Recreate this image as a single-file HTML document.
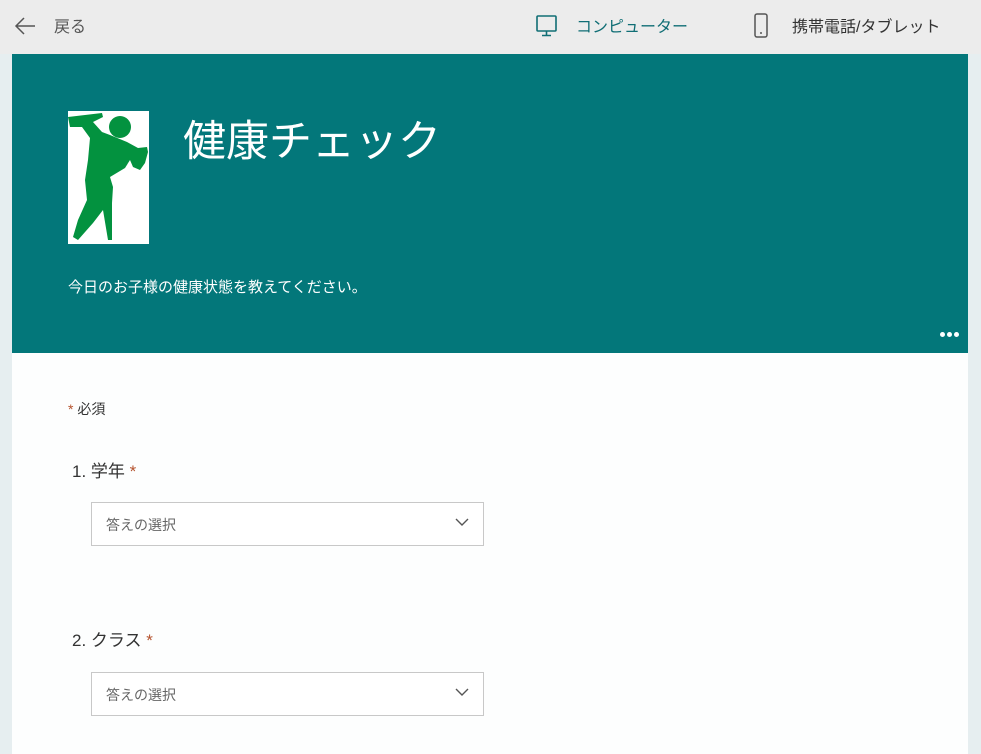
<!DOCTYPE html>
<html><head><meta charset="utf-8"><style>
*{margin:0;padding:0;box-sizing:border-box}
body{width:981px;height:743px;overflow:hidden;background:#e6eef0;font-family:"Liberation Sans","Noto Sans CJK JP",sans-serif;position:relative}
.top{position:absolute;left:0;top:0;width:981px;height:54px;background:#ececec}
.t{position:absolute;font-size:16px;top:13px;color:#333}
.card{position:absolute;left:12px;top:54px;width:956px;height:700px;background:#fdfefe}
.hdr{position:absolute;left:0;top:0;width:956px;height:299px;background:#03777a}
.sel{position:absolute;left:91px;width:393px;height:44px;border:1px solid #c8c8c8;background:#fff}
.sel span{position:absolute;left:14px;top:12px;font-size:14px;color:#666}
.sel svg{position:absolute;right:14px;top:14px}
.q{position:absolute;left:72px;font-size:17px;color:#333}
.ast{color:#b5522d}
.dot{position:absolute;top:278px;width:5px;height:5px;border-radius:50%;background:#fff}
</style></head><body>
<div class="top">
<svg style="position:absolute;left:14px;top:16px" width="22" height="20" viewBox="0 0 22 20"><path d="M10 2 L2 10 L10 18 M2 10 H21" stroke="#555" stroke-width="1.5" fill="none"/></svg>
<div class="t" style="left:54px;color:#555">戻る</div>
<svg style="position:absolute;left:535px;top:14px" width="24" height="24" viewBox="0 0 24 24"><rect x="2" y="2" width="19" height="15" rx="1" stroke="#106e75" stroke-width="1.6" fill="none"/><path d="M11.5 17 V21 M7 21.5 H16" stroke="#106e75" stroke-width="1.6"/></svg>
<div class="t" style="left:576px;color:#106e75">コンピューター</div>
<svg style="position:absolute;left:753px;top:13px" width="16" height="26" viewBox="0 0 16 26"><rect x="2" y="1" width="12" height="23" rx="2" stroke="#555" stroke-width="1.5" fill="none"/><path d="M7 20 H9" stroke="#555" stroke-width="1.5"/></svg>
<div class="t" style="left:792px">携帯電話/タブレット</div>
</div>
<div class="card">
<div class="hdr">
<div style="position:absolute;left:56px;top:57px;width:81px;height:133px;background:#fff">
<svg width="81" height="133" viewBox="0 0 81 133"><circle cx="52" cy="16" r="11" fill="#03923f"/><path d="M0 6 L34 2 L35 6 L25 11 L34 21 L42 24 L59 31 L70 37 L79 36 L80 41 L77 52 L72 59 L65 56 L62 49 L57 57 L42 66 L45 76 L44 92 L44 129 L40 129 L35 99 L25 112 L10 129 L5 126 L10 109 L19 89 L17 69 L20 49 L22 27 L14 16 L2 16 Z" fill="#03923f"/></svg>
</div>
<div style="position:absolute;left:171px;top:53px;font-size:43px;color:#fff">健康チェック</div>
<div style="position:absolute;left:56px;top:222px;font-size:15px;color:#fff">今日のお子様の健康状態を教えてください。</div>
<div class="dot" style="left:928px"></div><div class="dot" style="left:935px"></div><div class="dot" style="left:942px"></div>
</div>
<div style="position:absolute;left:56px;top:345px;font-size:14px;color:#333"><span class="ast">*</span> 必須</div>
</div>
<div class="q" style="top:457px">1. 学年 <span class="ast">*</span></div>
<div class="sel" style="top:502px"><span>答えの選択</span><svg width="14" height="10" viewBox="0 0 14 10"><path d="M1 2 L7 8 L13 2" stroke="#555" stroke-width="1.4" fill="none"/></svg></div>
<div class="q" style="top:626px">2. クラス <span class="ast">*</span></div>
<div class="sel" style="top:672px"><span>答えの選択</span><svg width="14" height="10" viewBox="0 0 14 10"><path d="M1 2 L7 8 L13 2" stroke="#555" stroke-width="1.4" fill="none"/></svg></div>
</body></html>
